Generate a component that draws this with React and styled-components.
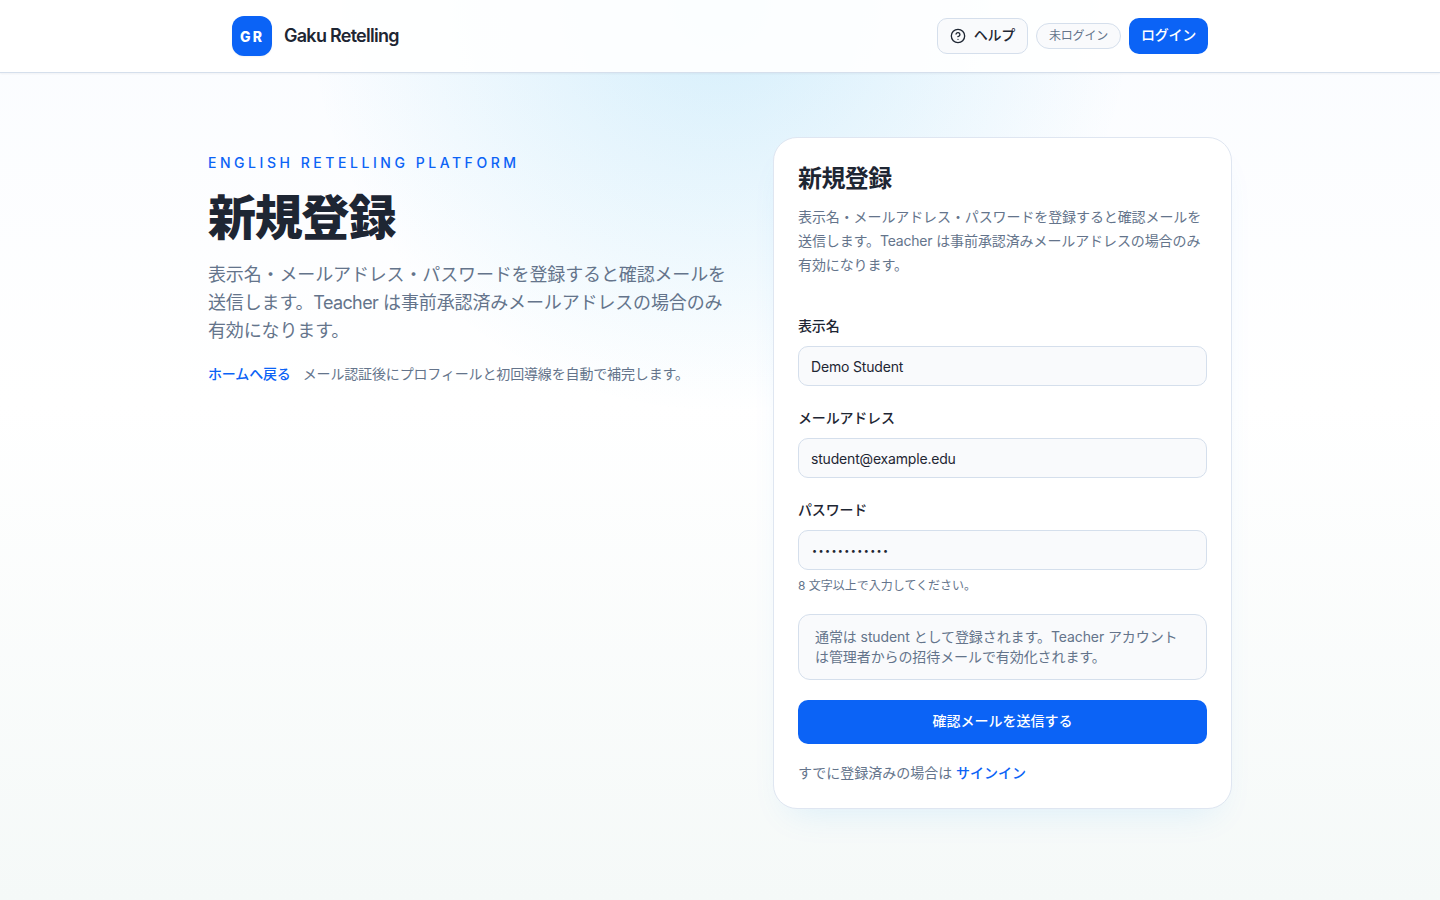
import React from 'react';
import styled, { createGlobalStyle } from 'styled-components';
import { CircleHelp } from 'lucide-react';

const GlobalStyles = createGlobalStyle`
  *, *::before, *::after {
    box-sizing: border-box;
  }

  body {
    margin: 0;
    min-height: 100vh;
    color: #1e2633;
    font-family: Inter, 'Noto Sans CJK JP', sans-serif;
    line-height: 1.5;
    -webkit-font-smoothing: antialiased;
    background:
      radial-gradient(circle at top, rgba(14, 165, 233, 0.16), transparent 36%),
      linear-gradient(180deg, #fafcff 0%, #ffffff 45%, #f5f9f8 100%);
  }

  h1, h2, p {
    margin: 0;
  }

  input, button {
    font: inherit;
    color: inherit;
  }
`;

const PageStyles = styled.div`
  height: 900px;
  overflow: hidden;
`;

const HeaderStyles = styled.header`
  height: 73px;
  border-bottom: 1px solid #d5dfec;
  background: rgba(255, 255, 255, 0.9);
  box-shadow: 0 1px 2px rgba(15, 23, 42, 0.05);

  .inner {
    display: flex;
    align-items: center;
    justify-content: space-between;
    width: 1024px;
    height: 72px;
    margin: 0 auto;
    padding: 0 24px;
  }
`;

const BrandStyles = styled.div`
  display: flex;
  align-items: center;
  gap: 12px;
  font-size: 18px;
  font-weight: 600;
  letter-spacing: -0.73px;

  .name {
    padding-bottom: 2px;
  }
`;

const LogoMark = styled.span`
  display: grid;
  place-items: center;
  width: 40px;
  height: 40px;
  border-radius: 12px;
  background: #0b63f6;
  color: #fff;
  font-size: 14px;
  font-weight: 800;
  letter-spacing: 2px;
  box-shadow: 0 1px 2px rgba(15, 23, 42, 0.05);
`;

const Actions = styled.div`
  display: flex;
  align-items: center;
  gap: 8px;
`;

const Button = styled.button`
  display: inline-flex;
  align-items: center;
  justify-content: center;
  gap: 8px;
  width: ${({ $full }) => ($full ? '100%' : 'auto')};
  height: ${({ $full }) => ($full ? '44px' : '36px')};
  padding: 0 12px ${({ $full }) => ($full ? '3px' : '0')};
  border: ${({ $primary }) => ($primary ? '0' : '1px solid #d5dfec')};
  border-radius: 10px;
  background: ${({ $primary }) => ($primary ? '#0b63f6' : '#f9fafc')};
  color: ${({ $primary }) => ($primary ? '#fff' : '#1e2633')};
  font-size: 14px;
  font-weight: 500;
  letter-spacing: ${({ $full }) => ($full ? '0' : '-0.25px')};
  white-space: nowrap;

  .text {
    padding-bottom: ${({ $full }) => ($full ? '0' : '3px')};
  }
`;

const Badge = styled.span`
  padding: 3px 12px;
  border: 1px solid #d5dfec;
  border-radius: 999px;
  background: #f9fafc;
  color: #64748b;
  font-size: 12px;
  font-weight: 400;
  line-height: 18px;
  letter-spacing: -0.2px;
`;

const MainStyles = styled.main`
  display: grid;
  grid-template-columns: 525px 459px;
  gap: 40px;
  align-items: start;
  width: 1024px;
  margin: 64px auto 0;
`;

const IntroStyles = styled.section`
  padding-top: 16px;

  .eyebrow {
    color: #0b63f6;
    font-size: 14px;
    font-weight: 500;
    line-height: 20px;
    letter-spacing: 3.54px;
  }

  h1 {
    margin-top: 21px;
    font-size: 48px;
    font-weight: 800;
    line-height: 48px;
    letter-spacing: -1.2px;
  }

  .lead {
    margin-top: 19px;
    color: #64748b;
    font-size: 18px;
    line-height: 28px;
    letter-spacing: -0.14px;
  }

  .links {
    display: flex;
    gap: 12px;
    margin-top: 19px;
    color: #64748b;
    font-size: 14px;
    line-height: 20px;
    letter-spacing: -0.15px;
  }
`;

/* Latin words sit tighter than the surrounding kana */
const Latin = styled.span`
  letter-spacing: ${({ $tight }) => ($tight ? '-0.035em' : '-0.015em')};
`;

const TextLink = styled.a`
  color: #0b63f6;
  font-weight: 500;
`;

const CardStyles = styled.section`
  height: 672px;
  padding: 25px 24px 24px;
  border: 1px solid #dfe6f1;
  border-radius: 24px;
  background: #fff;
  box-shadow: 0 18px 36px -16px rgba(14, 150, 245, 0.12);

  h2 {
    font-size: 24px;
    font-weight: 600;
    line-height: 32px;
    letter-spacing: -0.6px;
  }

  .description {
    margin-top: 10px;
    color: #64748b;
    font-size: 14px;
    line-height: 24px;
    letter-spacing: -0.1px;
  }
`;

const FormStyles = styled.form`
  display: grid;
  gap: 20px;
  margin-top: 37px;
`;

const FieldStyles = styled.label`
  display: grid;
  gap: 8px;
  font-size: 14px;
  font-weight: 500;
  letter-spacing: -0.18px;

  span {
    line-height: 24px;
  }

  input {
    width: 100%;
    height: 40px;
    padding: 0 12px;
    border: 1px solid #d5dfec;
    border-radius: 10px;
    background: #f9fafc;
    font-size: 14px;
    font-weight: 400;
    letter-spacing: -0.18px;
    outline: none;
  }

  input[type='password'] {
    padding: 1px 12px 0 13px;
    font-size: 9px;
    letter-spacing: 1.4px;
  }

  small {
    color: #64748b;
    font-size: 12px;
    font-weight: 400;
    line-height: 16px;
    letter-spacing: 0;
  }
`;

const Notice = styled.p`
  padding: 12px 24px 12px 16px;
  border: 1px solid #d5dfec;
  border-radius: 12px;
  background: #f9fafc;
  color: #64748b;
  font-size: 14px;
  line-height: 20px;
  letter-spacing: -0.09px;
`;

const SignIn = styled.p`
  margin-top: -1px;
  color: #64748b;
  font-size: 14px;
  line-height: 20px;
`;

function Description({ className, tight }) {
  return (
    <p className={className}>
      表示名・メールアドレス・パスワードを登録すると確認メールを送信します。
      <Latin $tight={tight}>Teacher</Latin>{' '}
      は事前承認済みメールアドレスの場合のみ有効になります。
    </p>
  );
}

function Header() {
  return (
    <HeaderStyles>
      <div className="inner">
        <BrandStyles>
          <LogoMark>GR</LogoMark>
          <span className="name">Gaku Retelling</span>
        </BrandStyles>
        <Actions>
          <Button type="button">
            <CircleHelp size={16} />
            <span className="text">ヘルプ</span>
          </Button>
          <Badge>未ログイン</Badge>
          <Button type="button" $primary>
            <span className="text">ログイン</span>
          </Button>
        </Actions>
      </div>
    </HeaderStyles>
  );
}

function Field({ label, hint, ...input }) {
  return (
    <FieldStyles>
      <span>{label}</span>
      <input {...input} />
      {hint && <small>{hint}</small>}
    </FieldStyles>
  );
}

function SignUpCard() {
  return (
    <CardStyles>
      <h2>新規登録</h2>
      <Description className="description" />
      <FormStyles>
        <Field label="表示名" type="text" defaultValue="Demo Student" />
        <Field
          label="メールアドレス"
          type="email"
          defaultValue="student@example.edu"
        />
        <Field
          label="パスワード"
          type="password"
          defaultValue="password1234"
          hint="8 文字以上で入力してください。"
        />
        <Notice>
          通常は student として登録されます。Teacher
          アカウントは管理者からの招待メールで有効化されます。
        </Notice>
        <Button type="button" $primary $full>
          <span className="text">確認メールを送信する</span>
        </Button>
        <SignIn>
          すでに登録済みの場合は <TextLink>サインイン</TextLink>
        </SignIn>
      </FormStyles>
    </CardStyles>
  );
}

export default function App() {
  return (
    <PageStyles>
      <GlobalStyles />
      <Header />
      <MainStyles>
        <IntroStyles>
          <p className="eyebrow">ENGLISH RETELLING PLATFORM</p>
          <h1>新規登録</h1>
          <Description className="lead" tight />
          <div className="links">
            <TextLink>ホームへ戻る</TextLink>
            <span>メール認証後にプロフィールと初回導線を自動で補完します。</span>
          </div>
        </IntroStyles>
        <SignUpCard />
      </MainStyles>
    </PageStyles>
  );
}
